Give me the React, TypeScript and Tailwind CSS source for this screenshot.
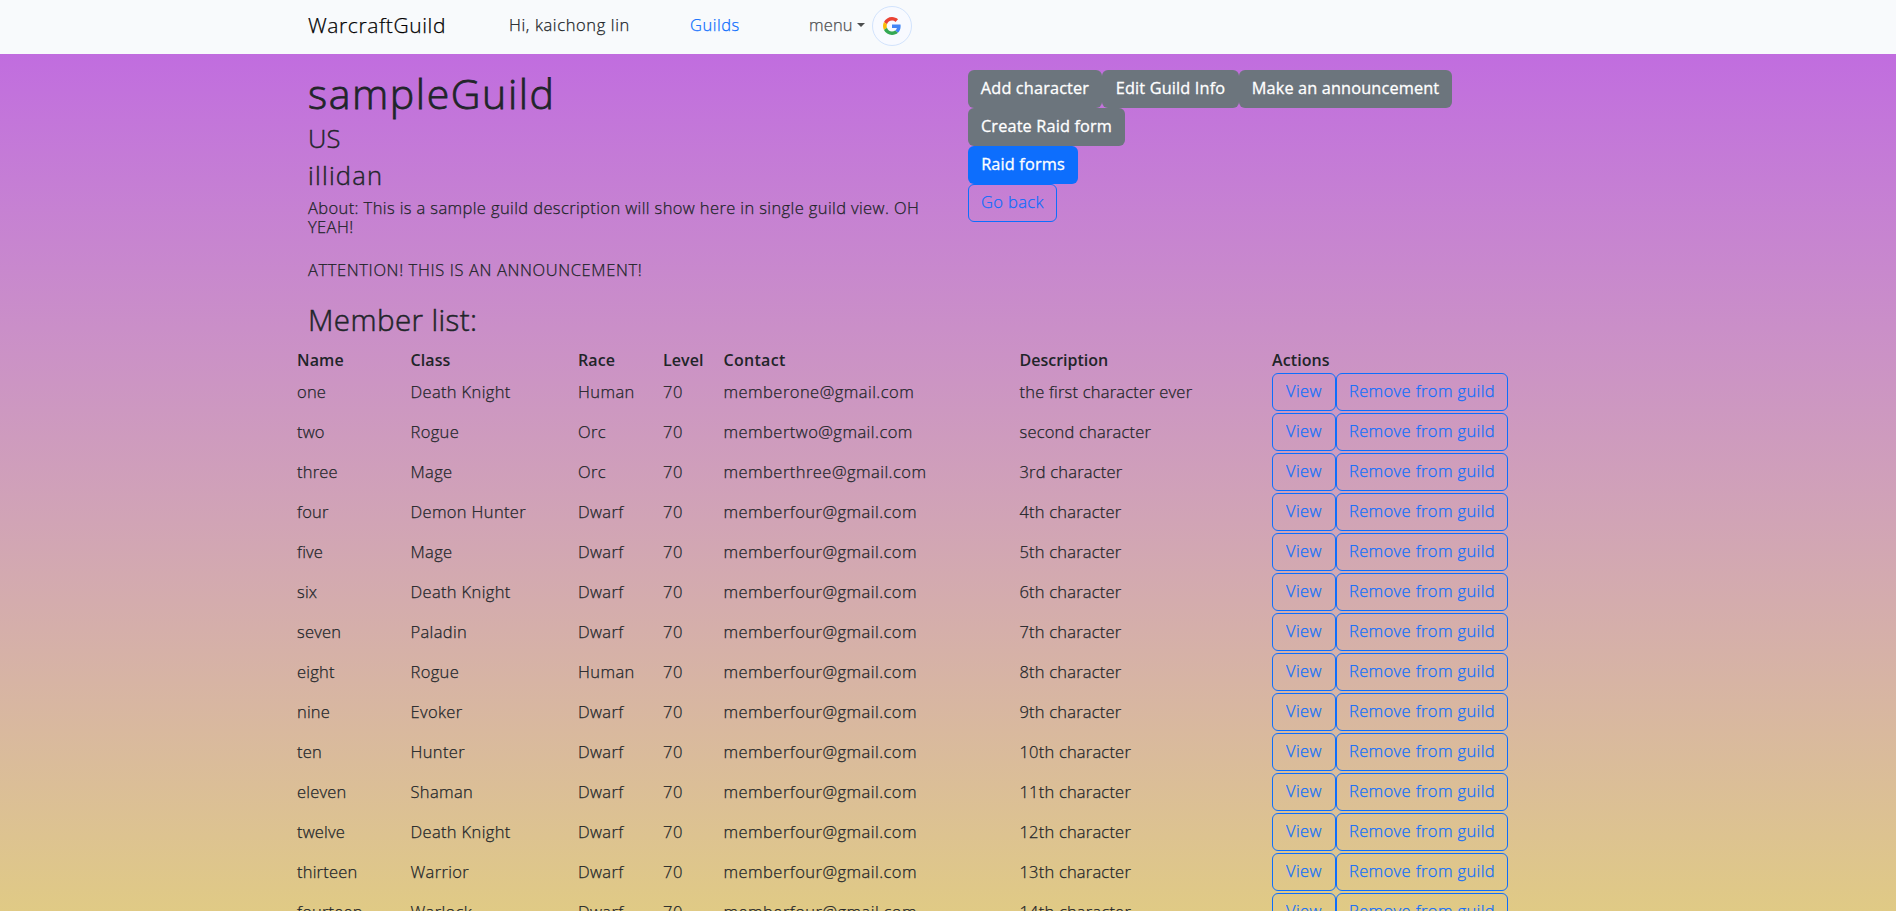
import React from "react";

const outline =
  "h-[38px] rounded-md border border-[#0d6efd] pb-[2px] text-[#0d6efd] tracking-[0.38px] whitespace-nowrap flex items-center justify-center";
const solid =
  "h-[38px] rounded-md pb-[2px] text-[16.3px] tracking-[0.15px] font-medium [-webkit-text-stroke:0.3px] text-white whitespace-nowrap flex items-center justify-center";
const cols =
  "grid grid-cols-[113.5px_167.5px_85px_60.5px_296px_252.5px_1fr] items-center whitespace-nowrap";

const members = [
  ["one", "Death Knight", "Human", "memberone@gmail.com", "the first character ever"],
  ["two", "Rogue", "Orc", "membertwo@gmail.com", "second character"],
  ["three", "Mage", "Orc", "memberthree@gmail.com", "3rd character"],
  ["four", "Demon Hunter", "Dwarf", "memberfour@gmail.com", "4th character"],
  ["five", "Mage", "Dwarf", "memberfour@gmail.com", "5th character"],
  ["six", "Death Knight", "Dwarf", "memberfour@gmail.com", "6th character"],
  ["seven", "Paladin", "Dwarf", "memberfour@gmail.com", "7th character"],
  ["eight", "Rogue", "Human", "memberfour@gmail.com", "8th character"],
  ["nine", "Evoker", "Dwarf", "memberfour@gmail.com", "9th character"],
  ["ten", "Hunter", "Dwarf", "memberfour@gmail.com", "10th character"],
  ["eleven", "Shaman", "Dwarf", "memberfour@gmail.com", "11th character"],
  ["twelve", "Death Knight", "Dwarf", "memberfour@gmail.com", "12th character"],
  ["thirteen", "Warrior", "Dwarf", "memberfour@gmail.com", "13th character"],
  ["fourteen", "Warlock", "Dwarf", "memberfour@gmail.com", "14th character"],
];

function GoogleLogo() {
  return (
    <svg viewBox="0 0 48 48" className="h-[18px] w-[18px]">
      <path fill="#EA4335" d="M24 9.5c3.54 0 6.71 1.22 9.21 3.6l6.85-6.85C35.9 2.38 30.47 0 24 0 14.62 0 6.51 5.38 2.56 13.22l7.98 6.19C12.43 13.72 17.74 9.5 24 9.5z" />
      <path fill="#4285F4" d="M46.98 24.55c0-1.57-.15-3.09-.38-4.55H24v9.02h12.94c-.58 2.96-2.26 5.48-4.78 7.18l7.73 6c4.51-4.18 7.09-10.36 7.09-17.65z" />
      <path fill="#FBBC05" d="M10.53 28.59c-.48-1.45-.76-2.99-.76-4.59s.27-3.14.76-4.59l-7.98-6.19C.92 16.46 0 20.12 0 24c0 3.88.92 7.54 2.56 10.78l7.97-6.19z" />
      <path fill="#34A853" d="M24 48c6.48 0 11.93-2.13 15.89-5.81l-7.73-6c-2.15 1.45-4.92 2.3-8.16 2.3-6.26 0-11.57-4.22-13.47-9.91l-7.98 6.19C6.51 42.62 14.62 48 24 48z" />
    </svg>
  );
}

export default function App() {
  return (
    <div className="flex h-[911px] flex-col overflow-hidden bg-linear-to-b from-[#bf65e3] to-[#e0ca85] font-['Open_Sans','Noto_Sans',sans-serif] text-[16.5px] leading-6 font-light tracking-[0.15px] text-[#212529] [-webkit-text-stroke:0.25px]">
      <nav className="flex h-[54px] shrink-0 items-center bg-[#f8fafc] pb-0.5 pl-[308px]">
        <span className="w-[201px] pb-0.5 text-[21px] tracking-[0.6px] text-black">WarcraftGuild</span>
        <span className="w-[181px] pb-[2px] tracking-[0.62px]">Hi, kaichong lin</span>
        <a className="w-[119px] pb-[2px] tracking-[0.5px] text-[#0d6efd]">Guilds</a>
        <span className="flex w-[63px] items-center gap-1 pb-[2px] text-[#4d4e4f]">
          menu
          <svg viewBox="0 0 10 5" className="h-[4px] w-[8px] shrink-0" fill="currentColor">
            <path d="M0 0h10L5 5z" />
          </svg>
        </span>
        <button className="flex h-10 w-10 items-center justify-center rounded-full border border-[#d2e3fc] bg-[#f8faff]">
          <GoogleLogo />
        </button>
      </nav>

      <header className="flex h-[245px] shrink-0 pt-4 pl-[308px]">
        <div className="w-[660px]">
          <h1 className="h-[54px] text-[41px] leading-[47px] tracking-[1.6px] [-webkit-text-stroke:0.8px]">sampleGuild</h1>
          <h3 className="h-[37px] text-[25.5px] leading-[29px] [-webkit-text-stroke:0.4px]">US</h3>
          <h3 className="h-[37px] text-[25.5px] leading-[29px] tracking-[1.2px] [-webkit-text-stroke:0.4px]">illidan</h3>
          <p className="w-[640px] leading-[19px] tracking-[0.39px] whitespace-pre-line">
            {"About: This is a sample guild description will show here in single guild view. OH\nYEAH!"}
          </p>
          <p className="mt-6 leading-[19px] tracking-[0.62px]">ATTENTION! THIS IS AN ANNOUNCEMENT!</p>
        </div>
        <div className="flex flex-col items-start">
          <div className="flex">
            <button className={solid + " w-[134px] bg-[#6c757d]"}>Add character</button>
            <button className={solid + " w-[137px] bg-[#6c757d]"}>Edit Guild Info</button>
            <button className={solid + " w-[213px] bg-[#6c757d]"}>Make an announcement</button>
          </div>
          <button className={solid + " w-[157px] bg-[#6c757d]"}>Create Raid form</button>
          <button className={solid + " w-[110px] bg-[#0d6efd]"}>Raid forms</button>
          <button className={outline + " w-[89px]"}>Go back</button>
        </div>
      </header>

      <main className="pl-[297px]">
        <h2 className="h-[47px] pl-[11px] text-[29.5px] leading-[42px] tracking-[0.4px] [-webkit-text-stroke:0.5px]">Member list:</h2>
        <div className={cols + " h-[27px] text-[16px] font-semibold tracking-[0.1px] [-webkit-text-stroke:0px]"}>
          <span>Name</span>
          <span>Class</span>
          <span>Race</span>
          <span>Level</span>
          <span className="tracking-[0.3px]">Contact</span>
          <span className="tracking-[0px]">Description</span>
          <span>Actions</span>
        </div>
        <div className="flex flex-col gap-0.5">
          {members.map(([name, cls, race, mail, desc]) => (
            <div key={name} className={cols + " h-[38px]"}>
              <span className="pb-px tracking-[0.2px]">{name}</span>
              <span className="pb-px tracking-[0.35px]">{cls}</span>
              <span className="pb-px tracking-[0.4px]">{race}</span>
              <span className="pb-px tracking-[0.7px]">70</span>
              <span className="pb-px tracking-[0.46px]">{mail}</span>
              <span className="pb-px tracking-[0.2px]">{desc}</span>
              <div className="flex">
                <button className={outline + " w-[64px]"}>View</button>
                <button className={outline + " w-[172px]"}>Remove from guild</button>
              </div>
            </div>
          ))}
        </div>
      </main>
    </div>
  );
}
